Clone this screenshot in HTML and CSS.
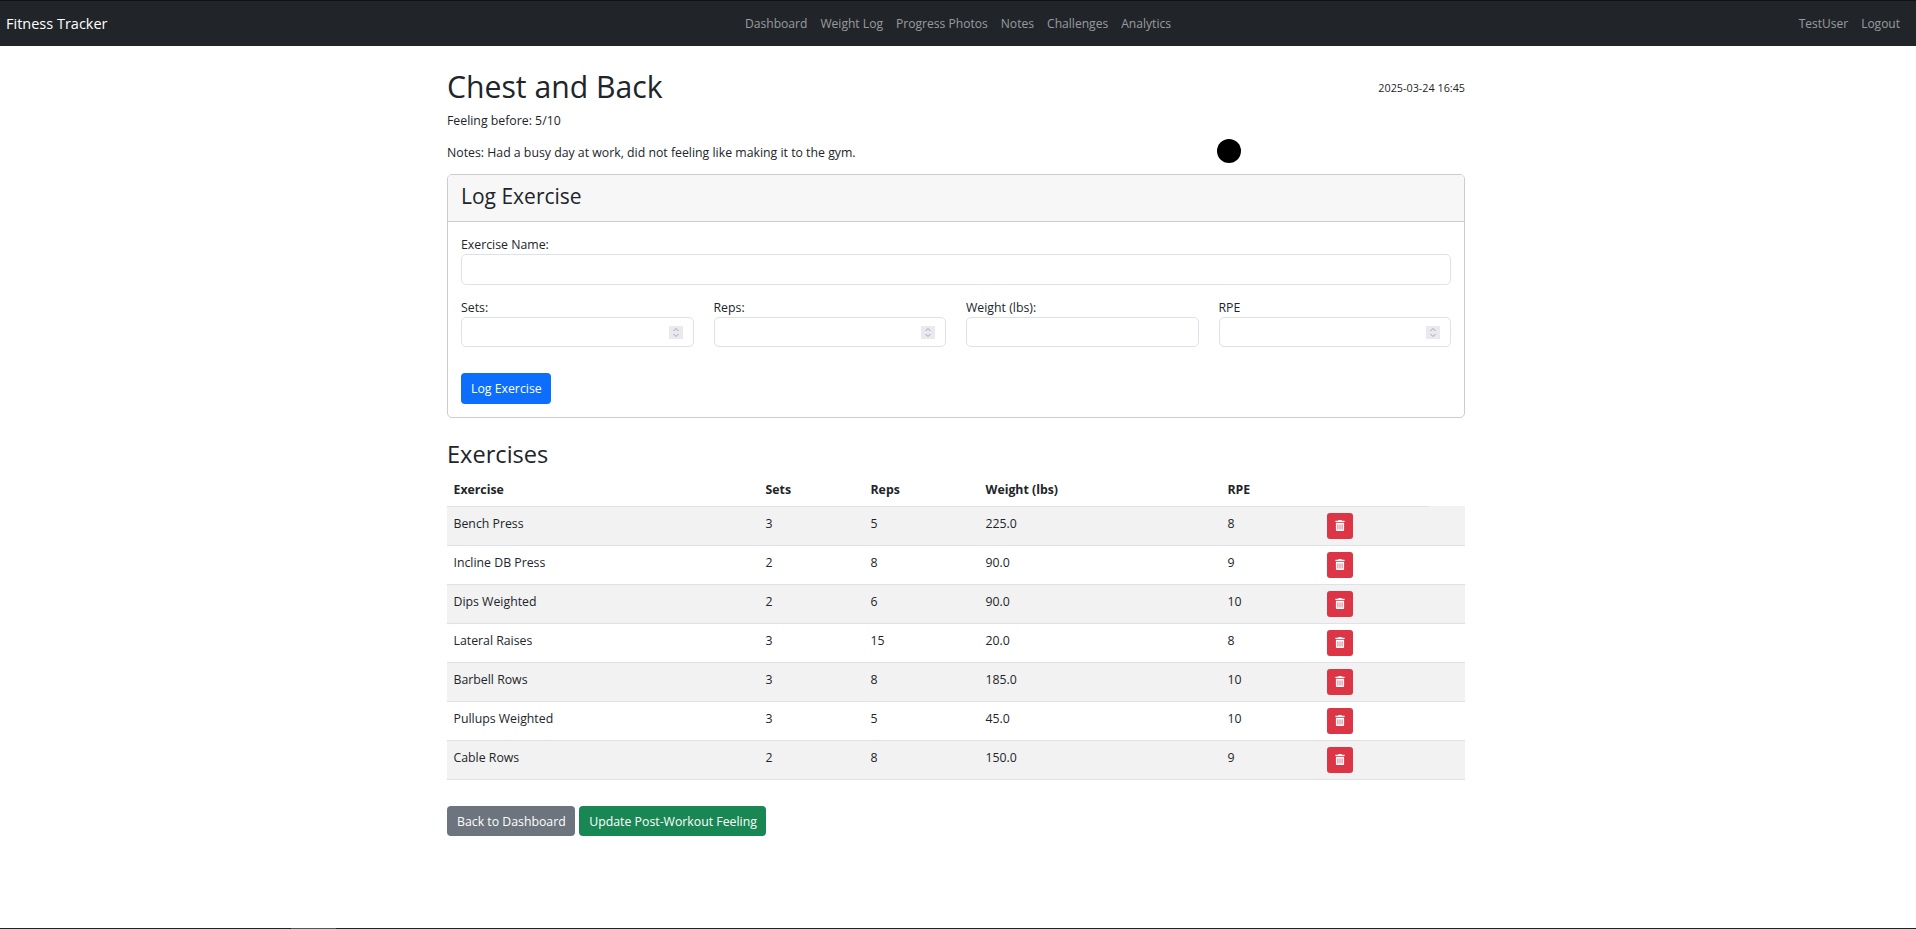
FILE: index.html
```html
<!DOCTYPE html>
<html lang="en">
<head>
  <meta charset="UTF-8" />
  <title>Chest and Back - Fitness Tracker</title>
  <link rel="stylesheet" href="styles.css">
</head>
<body>

  <nav class="navbar">
    <a class="brand" href="#">Fitness Tracker</a>
    <div class="nav-links">
      <a href="#">Dashboard</a>
      <a href="#">Weight Log</a>
      <a href="#">Progress Photos</a>
      <a href="#">Notes</a>
      <a href="#">Challenges</a>
      <a href="#">Analytics</a>
    </div>
    <div class="nav-user">
      <a href="#">TestUser</a>
      <a href="#">Logout</a>
    </div>
  </nav>

  <main class="container">
    <div class="title-row">
      <h1>Chest and Back</h1>
      <small class="timestamp">2025-03-24 16:45</small>
    </div>
    <p class="feeling">Feeling before: 5/10</p>
    <p class="notes">Notes: Had a busy day at work, did not feeling like making it to the gym.</p>

    <section class="card">
      <h2 class="card-header">Log Exercise</h2>
      <form class="card-body">
        <div class="field">
          <label for="name">Exercise Name:</label>
          <input type="text" id="name" />
        </div>
        <div class="form-row">
          <div class="field">
            <label for="sets">Sets:</label>
            <div class="number-wrap">
              <input type="number" id="sets" />
              <svg class="spin" viewBox="0 0 14 13"><use href="#spinner" /></svg>
            </div>
          </div>
          <div class="field">
            <label for="reps">Reps:</label>
            <div class="number-wrap">
              <input type="number" id="reps" />
              <svg class="spin" viewBox="0 0 14 13"><use href="#spinner" /></svg>
            </div>
          </div>
          <div class="field">
            <label for="weight">Weight (lbs):</label>
            <input type="text" id="weight" />
          </div>
          <div class="field">
            <label for="rpe">RPE</label>
            <div class="number-wrap">
              <input type="number" id="rpe" />
              <svg class="spin" viewBox="0 0 14 13"><use href="#spinner" /></svg>
            </div>
          </div>
        </div>
        <button type="button" class="btn btn-primary">Log Exercise</button>
      </form>
    </section>

    <h2 class="section-title">Exercises</h2>
    <table class="exercises">
      <colgroup>
        <col class="col-name" />
        <col class="col-sets" />
        <col class="col-reps" />
        <col class="col-weight" />
        <col class="col-rpe" />
        <col class="col-action" />
        <col class="col-rest" />
      </colgroup>
      <thead>
        <tr>
          <th>Exercise</th>
          <th>Sets</th>
          <th>Reps</th>
          <th>Weight (lbs)</th>
          <th>RPE</th>
          <th></th>
          <th class="no-border"></th>
        </tr>
      </thead>
      <tbody>
        <tr>
          <td>Bench Press</td><td>3</td><td>5</td><td>225.0</td><td>8</td>
          <td class="action" colspan="2"><button class="btn-delete"><svg viewBox="0 0 448 512"><use href="#trash" /></svg></button></td>
        </tr>
        <tr>
          <td>Incline DB Press</td><td>2</td><td>8</td><td>90.0</td><td>9</td>
          <td class="action" colspan="2"><button class="btn-delete"><svg viewBox="0 0 448 512"><use href="#trash" /></svg></button></td>
        </tr>
        <tr>
          <td>Dips Weighted</td><td>2</td><td>6</td><td>90.0</td><td>10</td>
          <td class="action" colspan="2"><button class="btn-delete"><svg viewBox="0 0 448 512"><use href="#trash" /></svg></button></td>
        </tr>
        <tr>
          <td>Lateral Raises</td><td>3</td><td>15</td><td>20.0</td><td>8</td>
          <td class="action" colspan="2"><button class="btn-delete"><svg viewBox="0 0 448 512"><use href="#trash" /></svg></button></td>
        </tr>
        <tr>
          <td>Barbell Rows</td><td>3</td><td>8</td><td>185.0</td><td>10</td>
          <td class="action" colspan="2"><button class="btn-delete"><svg viewBox="0 0 448 512"><use href="#trash" /></svg></button></td>
        </tr>
        <tr>
          <td>Pullups Weighted</td><td>3</td><td>5</td><td>45.0</td><td>10</td>
          <td class="action" colspan="2"><button class="btn-delete"><svg viewBox="0 0 448 512"><use href="#trash" /></svg></button></td>
        </tr>
        <tr>
          <td>Cable Rows</td><td>2</td><td>8</td><td>150.0</td><td>9</td>
          <td class="action" colspan="2"><button class="btn-delete"><svg viewBox="0 0 448 512"><use href="#trash" /></svg></button></td>
        </tr>
      </tbody>
    </table>

    <div class="actions">
      <a class="btn btn-secondary" href="#">Back to Dashboard</a>
      <a class="btn btn-success" href="#">Update Post-Workout Feeling</a>
    </div>
  </main>

  <div class="cursor-dot"></div>
  <div class="bottom-line"><span></span></div>

  <svg class="icon-defs" aria-hidden="true">
    <symbol id="trash" viewBox="0 0 448 512">
      <path fill="currentColor" d="M32 464a48 48 0 0 0 48 48h288a48 48 0 0 0 48-48V128H32zm272-256a16 16 0 0 1 32 0v224a16 16 0 0 1-32 0zm-96 0a16 16 0 0 1 32 0v224a16 16 0 0 1-32 0zm-96 0a16 16 0 0 1 32 0v224a16 16 0 0 1-32 0zM432 32H312l-9.4-18.7A24 24 0 0 0 281.1 0H166.8a23.72 23.72 0 0 0-21.35 13.3L136 32H16A16 16 0 0 0 0 48v32a16 16 0 0 0 16 16h416a16 16 0 0 0 16-16V48a16 16 0 0 0-16-16z" />
    </symbol>
    <symbol id="spinner" viewBox="0 0 14 13">
      <path fill="#e9e9ef" d="M0 0h14v13H0z" />
      <path fill="none" stroke="#a4a4ae" stroke-width="1" d="M4.5 5 7 2.5 9.5 5M4.5 8 7 10.5 9.5 8" />
    </symbol>
  </svg>

</body>
</html>
```

FILE: styles.css
```css
* {
  box-sizing: border-box;
}

body {
  margin: 0;
  font-family: "Open Sans", "Noto Sans", Arial, sans-serif;
  font-size: 12.3px;
  line-height: 19px;
  color: #212529;
  background: #fff;
}

a {
  text-decoration: none;
}

.navbar {
  display: grid;
  grid-template-columns: 1fr auto 1fr;
  align-items: center;
  height: 46px;
  padding: 0 16px;
  background: #212529;
  border-top: 1px solid #111;
}

.brand {
  margin-left: -10px;
  font-size: 14.5px;
  color: #fff;
}

.nav-links {
  display: flex;
  gap: 13px;
  font-size: 12.1px;
}

.nav-links a,
.nav-user a {
  color: rgba(255, 255, 255, 0.55);
}

.nav-user {
  display: flex;
  justify-content: flex-end;
  gap: 13px;
  font-size: 12px;
}

.container {
  width: 1018px;
  margin: 0 0 0 447px;
  padding-top: 22px;
}

.title-row {
  display: flex;
  justify-content: space-between;
  align-items: center;
}

h1 {
  margin: 0;
  font-size: 30.2px;
  font-weight: 400;
  line-height: 38px;
}

.timestamp {
  font-size: 10.8px;
}

.feeling {
  margin: 5px 0 0;
}

.notes {
  margin: 13px 0 0;
}

.card {
  margin-top: 12px;
  border: 1px solid #ccc;
  border-radius: 5px;
  overflow: hidden;
}

.card-header {
  margin: 0;
  height: 47px;
  padding: 0 13px;
  font-size: 21px;
  font-weight: 400;
  line-height: 43px;
  background: #f7f7f7;
  border-bottom: 1px solid #ccc;
}

.card-body {
  padding: 13px;
}

.field label {
  display: block;
}

.field input {
  display: block;
  width: 100%;
  height: 31px;
  padding: 0 10px;
  border: 1px solid #dee2e6;
  border-radius: 5px;
  background: #fff;
  font: inherit;
}

.form-row .field input {
  height: 30px;
}

.number-wrap {
  position: relative;
}

.spin {
  position: absolute;
  top: 9px;
  right: 11px;
  width: 14px;
  height: 13px;
}

.form-row {
  display: grid;
  grid-template-columns: repeat(4, 1fr);
  gap: 20px;
  margin: 13px 0 26px;
}

.btn {
  display: inline-block;
  height: 31px;
  padding: 0 8.5px 0 9px;
  border: 1px solid transparent;
  border-radius: 4px;
  font: inherit;
  line-height: 30px;
  color: #fff;
}

.btn-primary {
  background: #0d6efd;
}

.btn-secondary {
  background: #6c757d;
}

.btn-success {
  background: #198754;
}

.section-title {
  margin: 22px 0 0;
  font-size: 23.6px;
  font-weight: 400;
  line-height: 29px;
}

.exercises {
  width: 1018px;
  margin-top: 1px;
  table-layout: fixed;
  border-collapse: collapse;
}

.col-name { width: 312px; }
.col-sets { width: 105px; }
.col-reps { width: 115px; }
.col-weight { width: 242px; }
.col-rpe { width: 100px; }
.col-action { width: 108px; }
.col-rest { width: 36px; }

.exercises th {
  height: 36px;
  padding: 3px 7px 0 6.5px;
  text-align: left;
  border-bottom: 1px solid #dee2e6;
}

.exercises th.no-border {
  border-bottom: 0;
}

.exercises td {
  height: 39px;
  padding: 7px 7px 0 6.5px;
  vertical-align: top;
  border-bottom: 1px solid #dee2e6;
}

.exercises tbody tr:nth-child(odd) td {
  background: #f2f2f2;
}

.exercises td.action {
  padding: 6px 7px 0 6px;
}

.btn-delete {
  display: flex;
  align-items: center;
  justify-content: center;
  width: 26px;
  height: 26px;
  padding: 0;
  border: 0;
  border-radius: 3px;
  color: #fff;
  background: #dc3545;
}

.btn-delete svg {
  width: 10px;
  height: 11px;
}

.actions {
  display: flex;
  gap: 4px;
  margin-top: 26px;
}

.actions .btn {
  height: 30px;
  line-height: 29px;
}

.cursor-dot {
  position: absolute;
  top: 139px;
  left: 1217px;
  width: 24px;
  height: 24px;
  border-radius: 50%;
  background: #000;
}

.bottom-line {
  position: fixed;
  left: 0;
  right: 0;
  bottom: 0;
  height: 1px;
  background: #222;
}

.bottom-line span {
  display: block;
  width: 45px;
  height: 1px;
  margin-left: 291px;
  background: #555;
}

.icon-defs {
  display: none;
}
```
